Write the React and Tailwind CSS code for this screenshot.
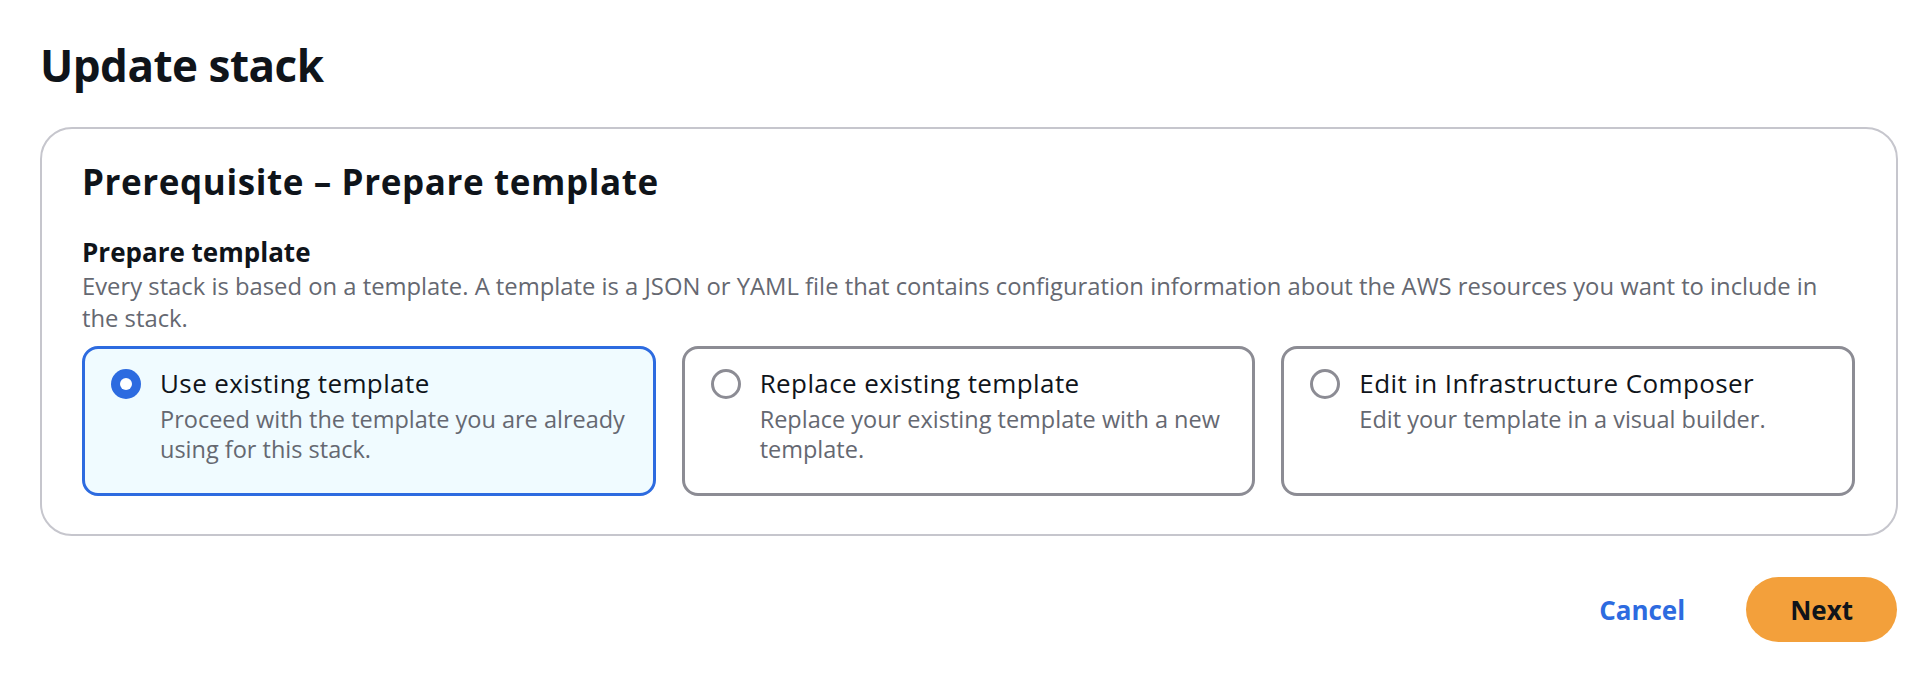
import React, { useState } from "react";

const options = [
  {
    id: "existing",
    title: "Use existing template",
    desc: "Proceed with the template you are already using for this stack.",
  },
  {
    id: "replace",
    title: "Replace existing template",
    desc: "Replace your existing template with a new template.",
  },
  {
    id: "composer",
    title: "Edit in Infrastructure Composer",
    desc: "Edit your template in a visual builder.",
  },
];

const Radio = ({ checked }) =>
  checked ? (
    <span className="flex h-[30px] w-[30px] shrink-0 items-center justify-center rounded-full bg-[#2d6be0]">
      <span className="block h-[12px] w-[12px] rounded-full bg-white" />
    </span>
  ) : (
    <span className="block h-[30px] w-[30px] shrink-0 rounded-full border-[3px] border-[#8c8c94] bg-white" />
  );

const App = () => {
  const [selected, setSelected] = useState("existing");

  return (
    <div
      className="min-h-screen bg-white pl-[40px] pr-[26px] pt-[37px] text-[#0f141a]"
      style={{ fontFamily: "'Open Sans', Roboto, Arial, sans-serif" }}
    >
      <h1 className="text-[44px] font-bold leading-[56px] tracking-[-0.5px]">Update stack</h1>

      {/* Prerequisite container */}
      <div className="mt-[34px] rounded-[32px] border-2 border-[#c6c6cd] pb-[38px] pl-[40px] pr-[41px] pt-[32px]">
        <h2 className="text-[35px] font-bold leading-[42px] tracking-[0.6px]">Prerequisite – Prepare template</h2>

        <div className="mt-[32px] text-[26px] font-bold leading-[34px]">Prepare template</div>
        <p className="mt-[1px] text-[23.8px] leading-[32px] text-[#656871]">
          Every stack is based on a template. A template is a JSON or YAML file that contains configuration information
          about the AWS resources you want to include in the stack.
        </p>

        <div className="mt-[12px] grid grid-cols-3 gap-[26px]">
          {options.map((o) => {
            const on = selected === o.id;
            return (
              <button
                key={o.id}
                type="button"
                onClick={() => setSelected(o.id)}
                className={`flex items-start gap-[19px] rounded-[16px] border-[3px] pb-[29px] pl-[26px] pr-[16px] pt-[18px] text-left ${
                  on ? "border-[#2d6be0] bg-[#f0fbff]" : "border-[#8c8c94] bg-white"
                }`}
              >
                <span className="block pt-[2px]">
                  <Radio checked={on} />
                </span>
                <span className="flex flex-col">
                  <span className="text-[26px] leading-[32px] tracking-[0.4px] text-[#0f141a]">{o.title}</span>
                  <span className="mt-[5px] text-[23.5px] leading-[30px] text-[#656871]">{o.desc}</span>
                </span>
              </button>
            );
          })}
        </div>
      </div>

      {/* Actions */}
      <div className="mt-[41px] flex items-center justify-end gap-[61px] pr-[1px]">
        <button type="button" className="text-[26px] font-bold leading-[32px] text-[#2d6be0]">
          Cancel
        </button>
        <button
          type="button"
          className="h-[65px] rounded-full bg-[#f3a03b] px-[44px] text-[26px] font-bold leading-[32px] text-[#0f141a]"
        >
          Next
        </button>
      </div>
    </div>
  );
};

export default App;
